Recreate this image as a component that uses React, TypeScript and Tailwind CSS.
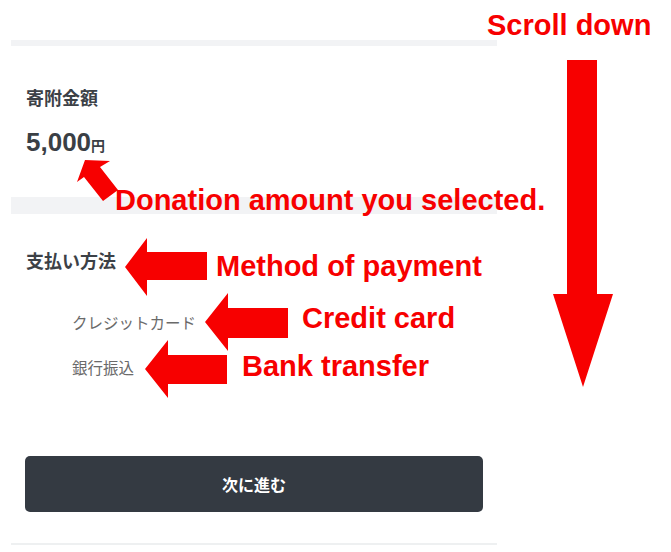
import React from "react";

const jp = { fontFamily: '"Noto Sans CJK JP", "Liberation Sans", sans-serif' };
const num = { fontFamily: '"Liberation Sans", "Noto Sans CJK JP", sans-serif' };
const note = { fontFamily: '"Liberation Sans", Arial, sans-serif' };

const Callout: React.FC<{ x: number; y: number; children: React.ReactNode }> = ({ x, y, children }) => (
  <span
    className="absolute whitespace-nowrap text-[29px] font-bold leading-[29px] text-[#f70000]"
    style={{ ...note, left: x, top: y }}
  >
    {children}
  </span>
);

const Arrows: React.FC = () => (
  <svg className="absolute inset-0 pointer-events-none" width="671" height="552" viewBox="0 0 671 552">
    <g fill="#f70000">
      <polygon points="567,60 597,60 597,294 613,294 583,387 553,294 567,294" />
      <polygon points="85,160 110,161 100,167 118,190 103,201 84,177 77,182" />
      <polygon points="125,267 147,238 147,252 207,252 207,280 147,280 147,296" />
      <polygon points="205,322 228,293 228,308 288,308 288,338 228,338 228,351" />
      <polygon points="145,369 168,340 168,355 227,355 227,384 168,384 168,398" />
    </g>
  </svg>
);

export default function App() {
  return (
    <div className="relative w-[671px] h-[552px] overflow-hidden bg-white">
      <div className="ml-[11px] w-[486px] pt-[40px] flex flex-col" style={jp}>
        <div className="h-[6px] bg-[#f2f3f5]" />

        <div className="px-[15px]">
          <p className="mt-[38px] text-[18px] font-bold leading-[26px] text-[#3c4147]">寄附金額</p>
          <p className="mt-[16px] flex items-baseline leading-[32px] text-[#3a3f45]">
            <span className="text-[26px] font-bold" style={num}>5,000</span>
            <span className="text-[14px] font-bold">円</span>
          </p>
        </div>

        <div className="mt-[36px] h-[17px] bg-[#f2f3f5]" />

        <div className="px-[15px]">
          <p className="mt-[33px] text-[18px] font-bold leading-[26px] text-[#3c4147]">支払い方法</p>
          <ul className="mt-[37px] pl-[46px] flex flex-col gap-[21px] text-[15.5px] leading-[24px] text-[#6a6a6a]">
            <li>クレジットカード</li>
            <li>銀行振込</li>
          </ul>
        </div>

        <button
          type="button"
          className="mt-[77px] mx-[14px] h-[56px] rounded-[5px] bg-[#343a42] text-[16px] font-bold text-white"
        >
          次に進む
        </button>

        <div className="mt-[31px] h-[2px] bg-[#eef0f1]" />
      </div>

      <Arrows />
      <Callout x={487} y={11}>Scroll down</Callout>
      <Callout x={115} y={186}>Donation amount you selected.</Callout>
      <Callout x={216} y={252}>Method of payment</Callout>
      <Callout x={302} y={304}>Credit card</Callout>
      <Callout x={242} y={352}>Bank transfer</Callout>
    </div>
  );
}
